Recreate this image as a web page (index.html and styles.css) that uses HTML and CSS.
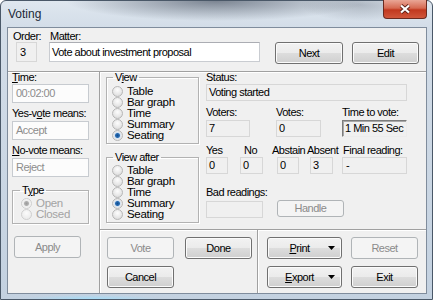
FILE: index.html
```html
<!DOCTYPE html>
<html>
<head>
    <title>Voting</title>
    <link rel="stylesheet" href="styles.css">
</head>
<body>
<div class="window">
    <div class="titlebar">
        <span class="title">Voting</span>
        <span class="close">
            <svg width="12" height="10" viewBox="0 0 12 10">
                <path d="M2 1.5L10 8.5M10 1.5L2 8.5" stroke="#5a2018" stroke-width="3.8"/>
                <path d="M2 1.5L10 8.5M10 1.5L2 8.5" stroke="#fff" stroke-width="2.2"/>
            </svg>
        </span>
    </div>
    <div class="client">
        <div class="top">
            <div class="order">
                <div class="lbl">Order:</div>
                <div class="fld ro order-fld">3</div>
            </div>
            <div class="matter">
                <div class="lbl">Matter:</div>
                <div class="fld edit matter-fld">Vote about investment proposal</div>
            </div>
            <button class="btn next">Next</button>
            <button class="btn edit-btn">Edit</button>
        </div>
        <div class="main">
            <!-- left column -->
            <div class="left">
                <div class="lbl first"><u>T</u>ime:</div>
                <div class="fld dis first">00:02:00</div>
                <div class="lbl">Yes-v<u>o</u>te means:</div>
                <div class="fld dis">Accept</div>
                <div class="lbl"><u>N</u>o-vote means:</div>
                <div class="fld dis">Reject</div>
                <fieldset class="grp type">
                    <legend>T<u>y</u>pe</legend>
                    <div class="opt off"><span class="rb on"></span>Open</div>
                    <div class="opt off"><span class="rb"></span>Closed</div>
                </fieldset>
                <button class="btn apply" disabled>Apply</button>
            </div>
            <!-- right side -->
            <div class="right">
                <div class="upper">
                    <div class="groups">
                        <fieldset class="grp view">
                            <legend>V<u>i</u>ew</legend>
                            <div class="opt"><span class="rb"></span>Table</div>
                            <div class="opt"><span class="rb"></span>Bar graph</div>
                            <div class="opt"><span class="rb"></span>Time</div>
                            <div class="opt"><span class="rb"></span>Summary</div>
                            <div class="opt"><span class="rb on"></span>Seating</div>
                        </fieldset>
                        <fieldset class="grp view after">
                            <legend>View after</legend>
                            <div class="opt"><span class="rb"></span>Table</div>
                            <div class="opt"><span class="rb"></span>Bar graph</div>
                            <div class="opt"><span class="rb"></span>Time</div>
                            <div class="opt"><span class="rb on"></span>Summary</div>
                            <div class="opt"><span class="rb"></span>Seating</div>
                        </fieldset>
                    </div>
                    <div class="status">
                        <div class="lbl">Status:</div>
                        <div class="fld ro st">Voting started</div>

                        <div class="row counts">
                            <div class="cell c-voters">
                                <div class="lbl">Voters:</div>
                                <div class="fld ro st">7</div>
                            </div>
                            <div class="cell c-votes">
                                <div class="lbl">Votes:</div>
                                <div class="fld ro st">0</div>
                            </div>
                            <div class="cell c-time">
                                <div class="lbl">Time to vote:</div>
                                <div class="fld sunken st">1 Min 55 Sec</div>
                            </div>
                        </div>

                        <div class="row heads">
                            <span class="h-yes">Yes</span>
                            <span class="h-no">No</span>
                            <span class="h-abs">Abstain</span>
                            <span class="h-away">Absent</span>
                            <span>Final reading:</span>
                        </div>
                        <div class="row results">
                            <div class="fld ro st r-yes">0</div>
                            <div class="fld ro st r-no">0</div>
                            <div class="fld ro st r-abs">0</div>
                            <div class="fld ro st r-away">3</div>
                            <div class="fld ro st r-final">-</div>
                        </div>

                        <div class="lbl bad">Bad readings:</div>
                        <div class="row badrow">
                            <div class="fld ro st bad-fld"></div>
                            <button class="btn handle" disabled>Handle</button>
                        </div>
                    </div>
                </div>
                <div class="lower">
                    <div class="btns-a">
                        <button class="btn" disabled>Vote</button>
                        <button class="btn">Done</button>
                        <button class="btn">Cancel</button>
                    </div>
                    <div class="btns-b">
                        <button class="btn drop"><span class="txt"><u>P</u>rint</span><svg width="7" height="4"><path d="M0 0h7L3.5 4z"/></svg></button>
                        <button class="btn" disabled>Reset</button>
                        <button class="btn drop"><span class="txt"><u>E</u>xport</span><svg width="7" height="4"><path d="M0 0h7L3.5 4z"/></svg></button>
                        <button class="btn">Exit</button>
                    </div>
                </div>
            </div>
        </div>
    </div>
</div>
</body>
</html>
```

FILE: styles.css
```css
body {
    margin: 0;
    background: #fff;
    font-family: "Liberation Sans", Arial, sans-serif;
    font-size: 11px;
    line-height: 11px;
    letter-spacing: -0.5px;
    color: #000;
}

/* window frame */
.window {
    width: 433px;
    height: 300px;
    box-sizing: border-box;
    border: 1px solid #4a5868;
    border-radius: 6px 6px 0 0;
    padding: 0 5px 5px 6px;
    display: flex;
    flex-direction: column;
    background:
        radial-gradient(ellipse 150px 20px at 215px 0, rgba(70, 80, 96, .65), rgba(70, 80, 96, 0)) no-repeat,
        radial-gradient(ellipse 60px 16px at 360px 4px, rgba(90, 100, 115, .35), rgba(90, 100, 115, 0)) no-repeat,
        radial-gradient(ellipse 70px 4px at 90px 298px, #a6dcf7, rgba(166, 220, 247, 0)) no-repeat,
        linear-gradient(180deg, #dfe7ef 0, #d3dde8 26px, #c3d1e0 100%);
}
.titlebar {
    height: 26px;
    display: flex;
    justify-content: space-between;
    align-items: flex-start;
}
.title {
    margin: 7px 0 0 1px;
    font-size: 12px;
    line-height: 12px;
    letter-spacing: 0;
    color: #1c2938;
}
.close {
    width: 44px;
    height: 19px;
    margin-top: -1px;
    box-sizing: border-box;
    border: 1px solid #6a2a20;
    border-top: 0;
    border-radius: 0 0 4px 4px;
    background: linear-gradient(180deg, #e9a696 0, #d66a52 45%, #c1381f 55%, #d0563b 100%);
    display: flex;
    align-items: center;
    justify-content: center;
}

/* client area */
.client {
    flex: 1;
    border: 1px solid #7f8c9c;
    background: #f0f0f0;
    display: flex;
    flex-direction: column;
}
.top {
    height: 44px;
    box-sizing: border-box;
    padding: 3px 0 0 5px;
    display: flex;
    align-items: flex-start;
    border-bottom: 1px solid #a0a0a0;
    box-shadow: 0 1px 0 #fff;
}
.lbl {
    height: 11px;
    white-space: nowrap;
}
.fld {
    box-sizing: border-box;
    white-space: nowrap;
    overflow: hidden;
    padding-left: 2px;
    display: flex;
    align-items: center;
}
.edit {
    background: #fff;
    border: 1px solid #c9ccd1;
    border-top-color: #abadb3;
}
.ro {
    background: #f0f0f0;
    border: 1px solid #d7d7d7;
}
.dis {
    background: #fcfcfc;
    border: 1px solid #c7cbd0;
    color: #8d8d8d;
    padding-left: 3px;
}
.sunken {
    background: #f0f0f0;
    border: 1px solid;
    border-color: #7c7c7c #ececec #ececec #7c7c7c;
    box-shadow: inset 1px 1px 0 #a8a8a8;
}
.order {
    width: 24px;
}
.order-fld {
    width: 21px;
    height: 20px;
    margin-left: 3px;
    padding-left: 3px;
}
.matter {
    margin-left: 12px;
}
.matter .lbl {
    padding-left: 1px;
}
.matter-fld {
    width: 211px;
    height: 20px;
}

/* buttons */
.btn {
    font: inherit;
    letter-spacing: inherit;
    color: #000;
    height: 22px;
    width: 67px;
    padding: 0;
    border: 1px solid #707070;
    border-radius: 3px;
    background: linear-gradient(180deg, #f2f2f2 0, #ebebeb 50%, #dddddd 50%, #cfcfcf 100%);
    box-shadow: inset 0 0 0 1px #fbfbfb;
}
.btn:disabled {
    color: #8b8b8b;
    border-color: #b0b4b7;
    background: #f4f4f4;
    box-shadow: none;
}
.next {
    width: 68px;
    margin: 11px 0 0 15px;
}
.edit-btn {
    margin: 11px 0 0 9px;
}

.main {
    flex: 1;
    display: flex;
}
.left {
    width: 92px;
    box-sizing: border-box;
    padding-left: 4px;
    border-right: 1px solid #a0a0a0;
    box-shadow: 1px 0 0 #fff;
}
.left .lbl {
    margin-top: 5px;
}
.left .lbl.first {
    margin-top: 0;
}
.left .fld {
    width: 77px;
    height: 19px;
    margin-top: 2px;
}
.left .fld.first {
    margin-top: 1px;
}

/* group boxes and radios */
.grp {
    margin: 0;
    padding: 0;
    box-sizing: border-box;
    border: 1px solid #b2b2b2;
    box-shadow: inset 1px 1px 0 #fff, 1px 1px 0 #fff;
}
.grp legend {
    padding: 0 2px;
    line-height: 11px;
    height: 11px;
}
.type {
    width: 77px;
    margin-top: 8px;
    padding: 2px 0 3px 8px;
}
.type legend {
    margin-left: -1px;
}
.apply {
    margin: 12px 0 0 2px;
}
.opt {
    display: flex;
    align-items: center;
    height: 11px;
    overflow: hidden;
    white-space: nowrap;
    font-size: 11.5px;
    letter-spacing: -0.3px;
}
.opt.off {
    color: #a3a3a3;
}
.rb {
    flex: none;
    width: 11px;
    height: 11px;
    box-sizing: border-box;
    margin-right: 4px;
    border-radius: 50%;
    border: 1px solid #b6b6b6;
    background: radial-gradient(circle at 50% 35%, #fdfdfd 0, #e6e6e6 60%, #d2d2d2 100%);
}
.rb.on {
    background: radial-gradient(circle, #0f4d8f 0, #2a6cb3 2px, #d4e3f3 3px, #e8e8e8 4px);
}
.off .rb {
    border-color: #cfcfcf;
    background: radial-gradient(circle at 50% 35%, #fbfbfb 0, #ececec 70%);
}
.off .rb.on {
    background: radial-gradient(circle, #9a9a9a 0, #b0b0b0 2px, #ececec 3px, #f2f2f2 4px);
}

.right {
    flex: 1;
    display: flex;
    flex-direction: column;
}
.upper {
    height: 157px;
    padding-left: 6px;
    display: flex;
    border-bottom: 1px solid #a0a0a0;
    box-shadow: 0 1px 0 #fff;
}
.groups {
    width: 93px;
}
.view {
    width: 93px;
    padding: 3px 0 2px 5px;
}
.view legend {
    margin-left: 1px;
}
.view.after {
    margin-top: 8px;
    padding-top: 2px;
}

/* status panel */
.status {
    width: 201px;
    margin-left: 7px;
}
.st {
    height: 17px;
}
.status > .st {
    margin-top: 1px;
}
.row {
    display: flex;
}
.counts {
    margin-top: 6px;
}
.cell .fld {
    margin-top: 2px;
}
.c-voters {
    width: 44px;
}
.c-votes {
    width: 45px;
    margin-left: 26px;
}
.c-time {
    width: 65px;
    margin-left: 21px;
}
.heads {
    margin-top: 8px;
    height: 11px;
    white-space: nowrap;
}
.h-yes { width: 38px; }
.h-no { width: 28px; }
.h-abs { width: 35px; }
.h-away { width: 36px; }
.results {
    margin-top: 1px;
}
.r-yes { width: 22px; }
.r-no { width: 23px; margin-left: 12px; }
.r-abs { width: 22px; margin-left: 14px; }
.r-away { width: 23px; margin-left: 11px; }
.r-final { width: 65px; margin-left: 9px; padding-left: 3px; }
.lbl.bad {
    margin-top: 13px;
}
.badrow {
    margin-top: 3px;
    align-items: flex-start;
}
.bad-fld {
    width: 57px;
}
.handle {
    height: 17px;
    margin: -1px 0 0 14px;
}

/* bottom buttons */
.lower {
    flex: 1;
    display: flex;
}
.btns-a {
    width: 158px;
    box-sizing: border-box;
    padding: 7px 0 0 7px;
    border-right: 1px solid #a0a0a0;
    box-shadow: 1px 0 0 #fff;
    display: grid;
    grid-template-columns: 67px 67px;
    grid-auto-rows: 22px;
    column-gap: 11px;
    row-gap: 7px;
    align-content: start;
}
.btns-b {
    padding: 7px 0 0 9px;
    display: grid;
    grid-template-columns: 75px 67px;
    grid-auto-rows: 22px;
    column-gap: 9px;
    row-gap: 7px;
    align-content: start;
}
.drop {
    width: 75px;
    display: flex;
    align-items: center;
    padding-right: 6px;
}
.drop .txt {
    flex: 1;
    text-align: center;
    padding-left: 3px;
}
```
